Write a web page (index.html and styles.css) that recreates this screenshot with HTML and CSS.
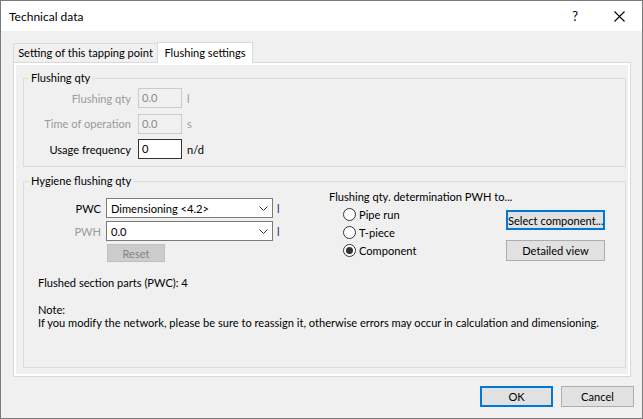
FILE: index.html
```html
<!doctype html>
<html lang="en">
<head>
    <meta charset="UTF-8">
    <title>Technical data</title>
    <link rel="stylesheet" href="styles.css">
</head>
<body>
<div class="window">
    <div class="titlebar">
        <span class="title">Technical data</span>
        <span class="help">?</span>
        <svg class="close" width="11" height="11" viewBox="0 0 11 11">
            <path d="M0.5 0.5 L10.5 10.5 M10.5 0.5 L0.5 10.5" stroke="#000" stroke-width="1.1" fill="none"/>
        </svg>
    </div>
    <div class="client">
        <div class="tabs">
            <div class="tab">Setting of this tapping point</div>
            <div class="tab active">Flushing settings</div>
        </div>
        <div class="panel">
            <fieldset class="group group-qty">
                <legend>Flushing qty</legend>
                <div class="qty-grid">
                    <label class="disabled">Flushing qty</label>
                    <div class="field disabled">0.0</div>
                    <span class="unit disabled">l</span>

                    <label class="disabled">Time of operation</label>
                    <div class="field disabled">0.0</div>
                    <span class="unit disabled">s</span>

                    <label>Usage frequency</label>
                    <div class="field active">0</div>
                    <span class="unit">n/d</span>
                </div>
            </fieldset>

            <fieldset class="group group-hyg">
                <legend>Hygiene flushing qty</legend>
                <div class="hyg-top">
                    <div class="hyg-left">
                        <label>PWC</label>
                        <div class="combo">
                            <span>Dimensioning &lt;4.2&gt;</span>
                            <svg width="9" height="5" viewBox="0 0 9 5"><path d="M0.5 0.5 L4.5 4.5 L8.5 0.5" stroke="#333" fill="none"/></svg>
                        </div>
                        <span class="unit blue">l</span>

                        <label class="disabled">PWH</label>
                        <div class="combo">
                            <span>0.0</span>
                            <svg width="9" height="5" viewBox="0 0 9 5"><path d="M0.5 0.5 L4.5 4.5 L8.5 0.5" stroke="#333" fill="none"/></svg>
                        </div>
                        <span class="unit blue">l</span>

                        <span></span>
                        <button class="btn reset" disabled>Reset</button>
                        <span></span>
                    </div>
                    <div class="hyg-right">
                        <div class="heading">Flushing qty. determination PWH to...</div>
                        <div class="choice">
                            <div class="radios">
                                <div class="radio"><span class="dot"></span>Pipe run</div>
                                <div class="radio"><span class="dot"></span>T-piece</div>
                                <div class="radio"><span class="dot checked"></span>Component</div>
                            </div>
                            <div class="side-buttons">
                                <button class="btn default">Select component...</button>
                                <button class="btn">Detailed view</button>
                            </div>
                        </div>
                    </div>
                </div>
                <p class="flushed">Flushed section parts (PWC): 4</p>
                <div class="note">
                    <div>Note:</div>
                    <div>If you modify the network, please be sure to reassign it, otherwise errors may occur in calculation and dimensioning.</div>
                </div>
            </fieldset>
        </div>
        <div class="footer">
            <button class="btn default wide">OK</button>
            <button class="btn wide">Cancel</button>
        </div>
    </div>
</div>
</body>
</html>
```

FILE: styles.css
```css
* {
    box-sizing: border-box;
}
body {
    margin: 0;
    font-family: Lato, "Noto Sans", sans-serif;
    font-size: 11.1px;
    color: #000;
    white-space: nowrap;
}
.window {
    width: 643px;
    height: 419px;
    border: 1px solid #7a7a7a;
    background-color: #F0F0F0;
    display: flex;
    flex-direction: column;
}
.titlebar {
    height: 30px;
    background-color: #FFF;
    display: flex;
    align-items: center;
    padding-left: 8px;
    font-size: 12px;
}
.title {
    flex: 1;
}
.help {
    margin-right: 36px;
    font-size: 13px;
}
.close {
    margin-right: 17px;
}
.client {
    flex: 1;
    padding: 11px 10px 0 12px;
    display: flex;
    flex-direction: column;
}
.tabs {
    display: flex;
    align-items: flex-end;
    height: 20px;
}
.tab {
    height: 19px;
    line-height: 18px;
    border: 1px solid #D9D9D9;
    border-bottom: none;
    text-align: center;
    width: 145px;
}
.tab.active {
    width: 96px;
    height: 21px;
    line-height: 19px;
    margin-bottom: -1px;
    margin-left: -1px;
    background-color: #FFF;
    position: relative;
    z-index: 1;
}
.panel {
    height: 315px;
    margin-right: 1px;
    border: 1px solid #D9D9D9;
    box-shadow: inset 0 0 0 2px #FFF;
    padding: 0 4px 8px 9px;
    display: flex;
    flex-direction: column;
}
.group {
    margin: 0;
    padding: 0;
    border: 1px solid #DCDCDC;
    min-width: 0;
}
.group legend {
    margin-left: 5px;
    padding: 0 2px;
    line-height: 16px;
}
.group-qty {
    margin-top: 7px;
    padding: 2px 0 7px 0;
}
.group-hyg {
    margin-top: 6px;
    flex: 1;
}
.qty-grid {
    display: grid;
    grid-template-columns: 107px 44px auto;
    grid-auto-rows: 20px;
    column-gap: 7px;
    row-gap: 5.5px;
    align-items: center;
}
.qty-grid label, .hyg-left label {
    text-align: right;
}
.disabled {
    color: #9A9A9A;
}
.field {
    height: 20px;
    line-height: 18px;
    padding-left: 3px;
    border: 1px solid #CCC;
    background-color: #F0F0F0;
}
.field.disabled {
    color: #8A8A8A;
}
.field.active {
    border-color: #333;
    background-color: #FFF;
    color: #000;
}
.unit {
    margin-left: -2px;
}
.unit.blue {
    color: #1E2A78;
    margin-left: -1px;
}
.hyg-top {
    display: flex;
}
.hyg-left {
    width: 305px;
    padding-top: 9px;
    display: grid;
    grid-template-columns: 77px 167px auto;
    grid-template-rows: 20px 20px 18px;
    column-gap: 5px;
    row-gap: 3px;
    align-items: center;
}
.hyg-left .combo {
    height: 20px;
}
.combo {
    border: 1px solid #7A7A7A;
    background-color: #FFF;
    display: flex;
    align-items: center;
    justify-content: space-between;
    padding: 0 4px 0 4px;
}
.hyg-right {
    flex: 1;
}
.heading {
    line-height: 16px;
}
.choice {
    display: flex;
}
.radios {
    width: 177px;
    padding-left: 14px;
}
.radio {
    height: 18px;
    display: flex;
    align-items: center;
}
.dot {
    width: 13px;
    height: 13px;
    border: 1px solid #333;
    border-radius: 50%;
    background-color: #FFF;
    margin-right: 3px;
    display: flex;
    align-items: center;
    justify-content: center;
}
.dot.checked::after {
    content: "";
    width: 7px;
    height: 7px;
    border-radius: 50%;
    background-color: #333;
}
.side-buttons {
    padding-top: 5px;
    display: flex;
    flex-direction: column;
    gap: 10px;
}
.btn {
    font-family: inherit;
    font-size: 11.1px;
    color: #000;
    background-color: #E1E1E1;
    border: 1px solid #ADADAD;
    padding: 0;
    height: 21px;
    width: 99px;
    white-space: nowrap;
}
.btn.default {
    border: 2px solid #0078D7;
}
.side-buttons .btn.default {
    height: 20px;
}
.btn.reset {
    width: 58px;
    height: 18px;
    margin-left: 1px;
    background-color: #CCC;
    border-color: #BFBFBF;
    color: #838383;
}
.flushed {
    margin: 13px 0 0 14px;
    line-height: 16px;
}
.note {
    margin: 12px 0 0 14px;
    line-height: 13px;
}
.footer {
    margin-top: 9px;
    display: flex;
    justify-content: flex-end;
    gap: 8px;
    margin-right: -2px;
}
.btn.wide {
    width: 73px;
}
```
